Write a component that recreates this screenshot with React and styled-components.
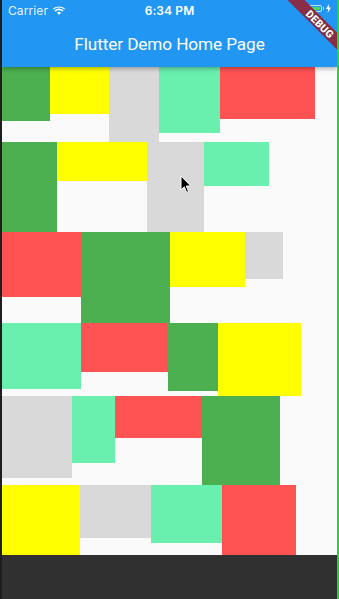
import React from "react"
import styled, { createGlobalStyle } from "styled-components"

const GlobalStyle = createGlobalStyle`
  html, body {
    margin: 0;
    padding: 0;
    background: #1e1e1e;
  }
  * {
    box-sizing: border-box;
  }
`

const COLORS = {
  green: "#4caf50",
  yellow: "#ffff00",
  grey: "#d9d9d9",
  mint: "#69f0ae",
  red: "#ff5252",
}

const ROWS = [
  [
    ["green", 48, 54],
    ["yellow", 59, 47],
    ["grey", 50, 75],
    ["mint", 61, 66],
    ["red", 95, 52],
  ],
  [
    ["green", 55, 90],
    ["yellow", 90, 39],
    ["grey", 57, 90],
    ["mint", 65, 44],
  ],
  [
    ["red", 79, 65],
    ["green", 89, 91],
    ["yellow", 75, 55],
    ["grey", 38, 47],
  ],
  [
    ["mint", 79, 66],
    ["red", 87, 49],
    ["green", 50, 68],
    ["yellow", 83, 73],
  ],
  [
    ["grey", 70, 82],
    ["mint", 43, 67],
    ["red", 87, 42],
    ["green", 78, 89],
  ],
  [
    ["yellow", 78, 70],
    ["grey", 71, 53],
    ["mint", 71, 58],
    ["red", 74, 70],
  ],
]

const Frame = styled.div`
  position: relative;
  width: 339px;
  height: 599px;
  display: flex;
  flex-direction: column;
  border-left: 2px solid #1e1e1e;
  border-right: 2px solid #2bd42b;
  overflow: hidden;
  font-family: Inter, "Noto Sans", sans-serif;
`

const AppBar = styled.header`
  position: relative;
  z-index: 2;
  background: #2196f3;
  color: #fff;
  box-shadow: 0 2px 4px rgba(0, 0, 0, 0.28);
`

const StatusBar = styled.div`
  height: 20px;
  display: grid;
  grid-template-columns: 1fr auto 1fr;
  align-items: center;
  padding: 0 6px 0 6px;
  font-size: 12px;
  letter-spacing: 0.1px;
`

const Carrier = styled.div`
  display: flex;
  align-items: center;
  gap: 5px;
  color: rgba(255, 255, 255, 0.92);
  padding-top: 1px;
`

const Clock = styled.div`
  font-weight: 600;
  padding-top: 1px;
`

const Battery = styled.div`
  justify-self: end;
  display: flex;
  align-items: center;
  gap: 4px;
  margin-top: -4px;
`

const BatteryBody = styled.div`
  position: relative;
  width: 19px;
  height: 7px;
  border: 1px solid rgba(255, 255, 255, 0.7);
  border-radius: 2px;
  padding: 1px;
  &::before {
    content: "";
    display: block;
    height: 100%;
    background: #4cd964;
    border-radius: 1px;
  }
  &::after {
    content: "";
    position: absolute;
    right: -3px;
    top: 1px;
    width: 1.5px;
    height: 3px;
    background: rgba(255, 255, 255, 0.7);
  }
`

const Toolbar = styled.div`
  height: 47px;
  display: flex;
  align-items: center;
  justify-content: center;
  font-family: Roboto, "Noto Sans", sans-serif;
  font-size: 17.2px;
  font-weight: 400;
  letter-spacing: -0.1px;
  padding-top: 1px;
`

const Banner = styled.div`
  position: absolute;
  z-index: 5;
  top: 18px;
  left: 266px;
  width: 104px;
  height: 12px;
  background: #8a2e48;
  color: #fff;
  transform: rotate(45deg);
  display: flex;
  align-items: center;
  justify-content: center;
  font-family: Roboto, sans-serif;
  font-size: 10.5px;
  font-weight: 900;
  letter-spacing: 0.2px;
  text-shadow: 0 0 1px rgba(0, 0, 0, 0.6);
`

const Content = styled.main`
  flex: 1;
  background: #fafafa;
  display: flex;
  flex-direction: column;
`

const Row = styled.div`
  display: flex;
  align-items: flex-start;
`

const Tile = styled.div`
  flex: none;
  width: ${(p) => p.$w}px;
  height: ${(p) => p.$h}px;
  background: ${(p) => COLORS[p.$color]};
`

const BottomBar = styled.footer`
  height: 44px;
  flex: none;
  background: #303030;
`

const Cursor = styled.svg`
  position: absolute;
  z-index: 4;
  left: 178px;
  top: 175px;
`

const WifiIcon = () => (
  <svg width="12" height="9" viewBox="0 0 12 9">
    <path
      d="M6 9 L8 6.6 A3.4 3.4 0 0 0 4 6.6 Z M6 4.3 A5.6 5.6 0 0 1 9.6 5.6 L10.6 4.4 A7.2 7.2 0 0 0 1.4 4.4 L2.4 5.6 A5.6 5.6 0 0 1 6 4.3 Z M6 1.6 A8.6 8.6 0 0 1 11.3 3.5 L12 2.6 A9.8 9.8 0 0 0 0 2.6 L0.7 3.5 A8.6 8.6 0 0 1 6 1.6 Z"
      fill="#fff"
    />
  </svg>
)

const Bolt = () => (
  <svg width="5" height="9" viewBox="0 0 5 9">
    <path d="M3 0 L0 5 L2.2 5 L1.6 9 L5 3.6 L2.8 3.6 Z" fill="#fff" />
  </svg>
)

export default function App() {
  return (
    <>
      <GlobalStyle />
      <Frame>
        <AppBar>
          <StatusBar>
            <Carrier>
              Carrier <WifiIcon />
            </Carrier>
            <Clock>6:34 PM</Clock>
            <Battery>
              <BatteryBody />
              <Bolt />
            </Battery>
          </StatusBar>
          <Toolbar>Flutter Demo Home Page</Toolbar>
        </AppBar>
        <Banner>DEBUG</Banner>
        <Content>
          {ROWS.map((row, i) => (
            <Row key={i}>
              {row.map(([color, w, h], j) => (
                <Tile key={j} $color={color} $w={w} $h={h} />
              ))}
            </Row>
          ))}
        </Content>
        <BottomBar />
        <Cursor width="12" height="19" viewBox="0 0 12 19">
          <path
            d="M1 1 L1 15 L4.3 11.8 L6.6 17.4 L8.6 16.5 L6.3 11 L10.8 11 Z"
            fill="#000"
            stroke="#fff"
            strokeWidth="1"
            strokeLinejoin="round"
          />
        </Cursor>
      </Frame>
    </>
  )
}
